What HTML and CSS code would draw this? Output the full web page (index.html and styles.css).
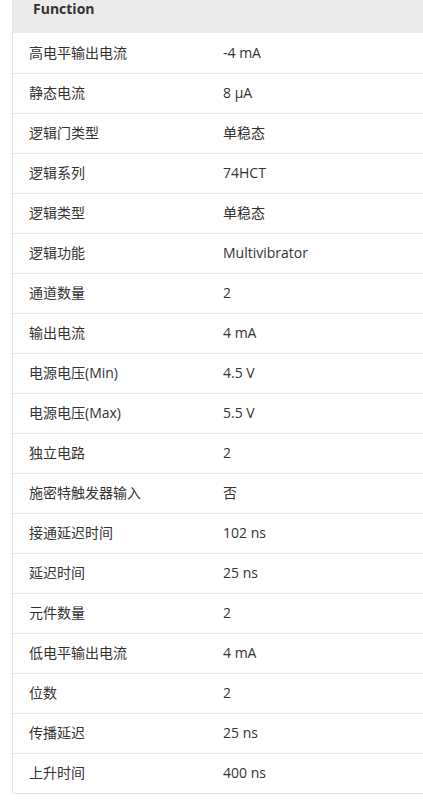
FILE: index.html
```html
<!DOCTYPE html>
<html lang="zh">
<head>
<meta charset="utf-8">
<link rel="stylesheet" href="styles.css">
</head>
<body>
<div class="table">
  <div class="head">Function</div>
  <div class="row"><div class="k">高电平输出电流</div><div class="v">-4 mA</div></div>
  <div class="row"><div class="k">静态电流</div><div class="v">8 μA</div></div>
  <div class="row"><div class="k">逻辑门类型</div><div class="v">单稳态</div></div>
  <div class="row"><div class="k">逻辑系列</div><div class="v">74HCT</div></div>
  <div class="row"><div class="k">逻辑类型</div><div class="v">单稳态</div></div>
  <div class="row"><div class="k">逻辑功能</div><div class="v">Multivibrator</div></div>
  <div class="row"><div class="k">通道数量</div><div class="v">2</div></div>
  <div class="row"><div class="k">输出电流</div><div class="v">4 mA</div></div>
  <div class="row"><div class="k">电源电压(Min)</div><div class="v">4.5 V</div></div>
  <div class="row"><div class="k">电源电压(Max)</div><div class="v">5.5 V</div></div>
  <div class="row"><div class="k">独立电路</div><div class="v">2</div></div>
  <div class="row"><div class="k">施密特触发器输入</div><div class="v">否</div></div>
  <div class="row"><div class="k">接通延迟时间</div><div class="v">102 ns</div></div>
  <div class="row"><div class="k">延迟时间</div><div class="v">25 ns</div></div>
  <div class="row"><div class="k">元件数量</div><div class="v">2</div></div>
  <div class="row"><div class="k">低电平输出电流</div><div class="v">4 mA</div></div>
  <div class="row"><div class="k">位数</div><div class="v">2</div></div>
  <div class="row"><div class="k">传播延迟</div><div class="v">25 ns</div></div>
  <div class="row"><div class="k">上升时间</div><div class="v">400 ns</div></div>
</div>
</body>
</html>
```
FILE: styles.css
```css
html, body {
  margin: 0;
  padding: 0;
  background: #fff;
  overflow: hidden;
}
body {
  font-family: "Open Sans", "Noto Sans CJK SC", sans-serif;
  font-size: 14px;
  color: #333;
}
.table {
  margin-left: 12px;
  border-left: 1px solid #e5e5e5;
  border-bottom: 1px solid #e5e5e5;
  border-bottom-left-radius: 3px;
}
.head {
  height: 33px;
  box-sizing: border-box;
  background: #ebebeb;
  padding: 0 0 0 20px;
  font-weight: 700;
  font-size: 14px;
  line-height: 18px;
  color: #333;
}
.row {
  display: grid;
  grid-template-columns: 194px 1fr;
  padding-left: 16px;
  height: 40px;
  box-sizing: border-box;
  align-items: center;
  border-top: 1px solid #e8e8e8;
}
.row:nth-child(2) { border-top: none; }
.k, .v { line-height: 20px; margin-top: -1px; }
```
